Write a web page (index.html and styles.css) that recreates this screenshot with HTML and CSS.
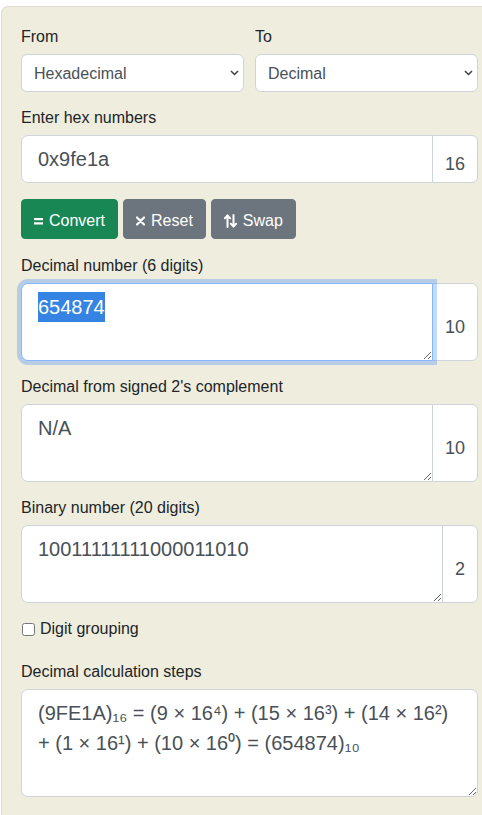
FILE: index.html
```html
<!DOCTYPE html>
<html lang="en">
<head>
<meta charset="utf-8">
<title>Hex to Decimal</title>
<link rel="stylesheet" href="styles.css">
</head>
<body>
<div class="panel">
  <div class="row2">
    <div class="col">
      <label class="lbl">From</label>
      <div class="sel-wrap">
        <select class="sel"><option>Hexadecimal</option></select>
        <svg class="chev" width="9" height="6" viewBox="0 0 9 6"><path d="M1 1 L4.5 4.5 L8 1" stroke="#3c3f44" stroke-width="1.5" fill="none"/></svg>
      </div>
    </div>
    <div class="col">
      <label class="lbl">To</label>
      <div class="sel-wrap">
        <select class="sel"><option>Decimal</option></select>
        <svg class="chev" width="9" height="6" viewBox="0 0 9 6"><path d="M1 1 L4.5 4.5 L8 1" stroke="#3c3f44" stroke-width="1.5" fill="none"/></svg>
      </div>
    </div>
  </div>

  <div class="field f-input">
    <label class="lbl">Enter hex numbers</label>
    <div class="igroup">
      <input class="ctl" type="text" value="0x9fe1a">
      <span class="addon">16</span>
    </div>
  </div>

  <div class="btns">
    <button class="btn btn-green">
      <svg class="ico" width="9" height="10" viewBox="0 0 9 10"><rect x="0" y="2" width="9" height="2.2" fill="#fff"/><rect x="0" y="6.3" width="9" height="2.2" fill="#fff"/></svg>Convert
    </button>
    <button class="btn btn-gray">
      <svg class="ico" width="9" height="10" viewBox="0 0 9 10"><path d="M1 1.5 L8 8.5 M8 1.5 L1 8.5" stroke="#fff" stroke-width="2.2" stroke-linecap="round"/></svg>Reset
    </button>
    <button class="btn btn-gray">
      <svg class="ico" width="13" height="14" viewBox="0 0 13 14"><path d="M3.5 13 V1.5 M0.8 4.3 L3.5 1.3 L6.2 4.3" stroke="#fff" stroke-width="2" fill="none" stroke-linecap="round" stroke-linejoin="round"/><path d="M9.5 1 V12.5 M6.8 9.7 L9.5 12.7 L12.2 9.7" stroke="#fff" stroke-width="2" fill="none" stroke-linecap="round" stroke-linejoin="round"/></svg>Swap
    </button>
  </div>

  <div class="field">
    <label class="lbl">Decimal number (6 digits)</label>
    <div class="igroup">
      <textarea id="dec" class="ctl ta focused" rows="2">654874</textarea>
      <span class="addon">10</span>
    </div>
  </div>

  <div class="field">
    <label class="lbl">Decimal from signed 2's complement</label>
    <div class="igroup">
      <textarea class="ctl ta" rows="2">N/A</textarea>
      <span class="addon">10</span>
    </div>
  </div>

  <div class="field f-bin">
    <label class="lbl">Binary number (20 digits)</label>
    <div class="igroup">
      <textarea class="ctl ta" rows="2">10011111111000011010</textarea>
      <span class="addon">2</span>
    </div>
  </div>

  <div class="check-row">
    <input type="checkbox" class="chk" id="grp">
    <label for="grp" class="chk-lbl">Digit grouping</label>
  </div>

  <div class="field">
    <label class="lbl">Decimal calculation steps</label>
    <textarea class="ctl ta steps" rows="3">(9FE1A)₁₆ = (9 × 16⁴) + (15 × 16³) + (14 × 16²) + (1 × 16¹) + (10 × 16⁰) = (654874)₁₀</textarea>
  </div>
</div>
<script src="script.js"></script>
</body>
</html>
```

FILE: styles.css
```css
html, body {
  margin: 0;
  padding: 0;
  background: #ffffff;
  overflow: hidden;
}
body {
  font-family: "Liberation Sans", Arial, sans-serif;
  font-size: 16px;
  color: #212529;
}
.panel {
  margin: 6px 0 0 1px;
  width: 457px;
  padding: 17px 19px 40px 19px;
  background: #efedde;
  border: 1px solid #dddbcc;
  border-radius: 7px;
}
.lbl {
  display: block;
  line-height: 24px;
  padding-top: 1px;
  margin-bottom: 5px;
}
.row2 {
  display: grid;
  grid-template-columns: 223px 223px;
  column-gap: 11px;
  margin-bottom: 13px;
}
.sel-wrap {
  position: relative;
}
.sel {
  display: block;
  width: 100%;
  height: 38px;
  padding: 0 24px 0 12px;
  font-family: "Liberation Sans", Arial, sans-serif;
  font-size: 16px;
  color: #495057;
  background: #fff;
  border: 1px solid #ced4da;
  border-radius: 6px;
  appearance: none;
  -webkit-appearance: none;
}
.chev {
  position: absolute;
  right: 5px;
  top: 16px;
  pointer-events: none;
}
.field {
  margin-bottom: 13px;
}
.f-input {
  margin-bottom: 16px;
}
.f-bin {
  margin-bottom: 14px;
}
.igroup {
  display: flex;
  align-items: stretch;
}
.ctl {
  flex: 1 1 auto;
  min-width: 0;
  box-sizing: border-box;
  margin: 0;
  font-family: "Liberation Sans", Arial, sans-serif;
  font-size: 20px;
  line-height: 30px;
  color: #495057;
  background: #fff;
  border: 1px solid #ced4da;
  border-radius: 7px 0 0 7px;
  padding: 8px 16px;
  outline: none;
  position: relative;
  z-index: 1;
}
input.ctl {
  height: 48px;
}
.ta {
  height: 78px;
  resize: vertical;
  display: block;
}
.ta::selection {
  background: #3584e4;
  color: #fff;
}
.focused {
  border-color: #86b7fe;
  box-shadow: 0 0 0 4px rgba(13, 110, 253, 0.25);
  z-index: 2;
}
.steps {
  width: 100%;
  height: 108px;
  border-radius: 7px;
}
.addon {
  display: flex;
  align-items: center;
  box-sizing: border-box;
  padding: 10px 12px 0 12px;
  margin-left: -1px;
  font-size: 18px;
  color: #495057;
  background: #fff;
  border: 1px solid #ced4da;
  border-radius: 0 6px 6px 0;
}
.btns {
  display: flex;
  gap: 5px;
  margin-bottom: 14px;
}
.btn {
  display: inline-flex;
  align-items: center;
  gap: 6px;
  height: 40px;
  padding: 3px 12px 0 12px;
  font-family: "Liberation Sans", Arial, sans-serif;
  font-size: 16px;
  color: #fff;
  border: 1px solid transparent;
  border-radius: 4px;
}
.btn-green {
  background: #198754;
  border-color: #198754;
}
.btn-gray {
  background: #6c757d;
  border-color: #6c757d;
}
.ico {
  display: block;
}
.check-row {
  display: flex;
  align-items: center;
  height: 24px;
  margin-bottom: 18px;
}
.chk {
  width: 13px;
  height: 13px;
  margin: 0 5px 0 1px;
}
.chk-lbl {
  line-height: 24px;
}
```

FILE: script.js
```js
var t = document.getElementById('dec');
t.focus();
t.setSelectionRange(0, t.value.length);
```
